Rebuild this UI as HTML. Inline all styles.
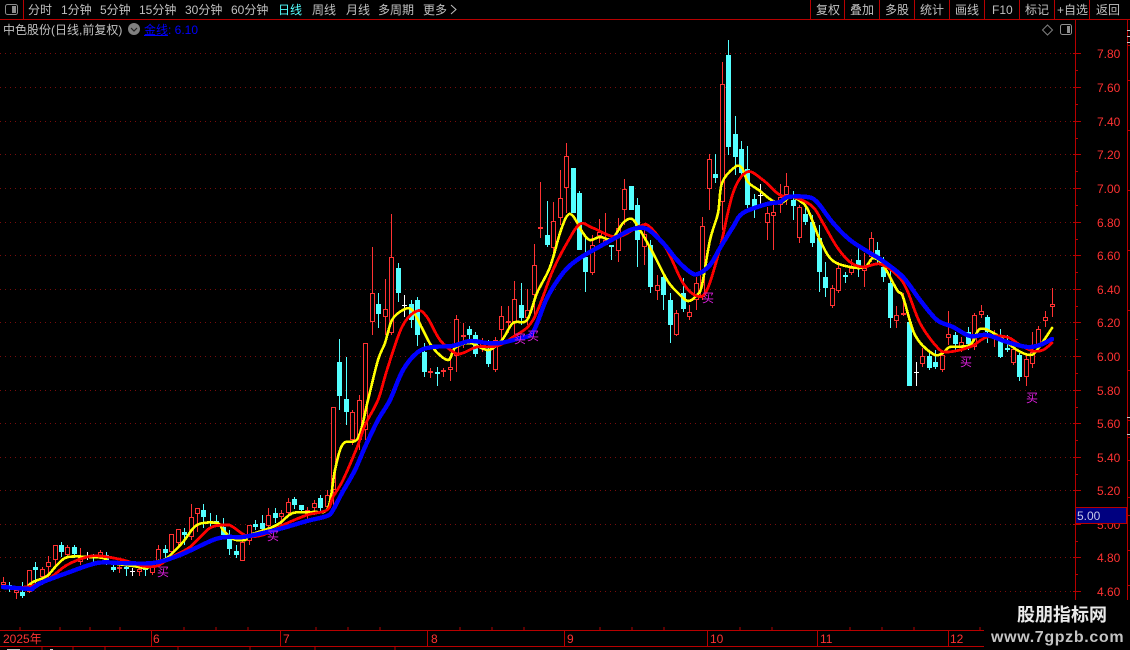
<!DOCTYPE html>
<html lang="zh"><head><meta charset="utf-8"><title>中色股份</title>
<style>
html,body{margin:0;padding:0;background:#000;width:1130px;height:650px;overflow:hidden}
svg{position:absolute;left:0;top:0;display:block}
text{font-family:"Liberation Sans","WenQuanYi Zen Hei","Noto Sans CJK SC",sans-serif;font-size:12px}
.t{fill:#c0c0c0}.p{fill:#ff3232}.m{fill:#e020e0}
</style></head><body>
<svg id="s" width="1130" height="650" viewBox="0 0 1130 650" xmlns="http://www.w3.org/2000/svg">
<rect width="1130" height="650" fill="#000"/>
<path d="M0 53.5H1075M0 87.5H1075M0 121.5H1075M0 154.5H1075M0 188.5H1075M0 222.5H1075M0 255.5H1075M0 289.5H1075M0 322.5H1075M0 356.5H1075M0 390.5H1075M0 423.5H1075M0 457.5H1075M0 490.5H1075M0 524.5H1075M0 557.5H1075M0 591.5H1075" stroke="#7a0c0c" stroke-width="1" stroke-dasharray="1 4" fill="none"/>
<g id="c" shape-rendering="crispEdges"></g>
<g id="l" fill="none" stroke-linejoin="round" stroke-linecap="round" shape-rendering="crispEdges">
<polyline stroke="#ffff00" stroke-width="2.6" points="27,587 33,582 47,576 57,565 68,557 90,557 103,558 112,563 133,566 147,568 155,562 167,558 183,542 197,525 217,523 223,530 233,539 245,540 250,535 270,528 280,523 293,513 313,512 328,508 335,470 343,444 358,438 368,400 378,360 385,343 392,320 403,310 412,310 423,330 433,348 448,360 455,348 470,343 488,350 502,340 513,323 527,320 537,293 550,267 560,233 567,216 573,216 583,233 590,240 600,237 612,239 623,223 632,219 640,230 653,253 667,280 677,292 688,301 697,295 702,285 710,240 718,213 722,183 735,167 742,168 748,182 760,191 773,201 783,202 790,197 800,201 808,210 820,240 832,260 850,267 865,267 873,258 883,265 897,290 903,297 915,335 933,354 943,353 950,347 970,345 980,329 997,335 1017,350 1030,355 1037,350 1052,328"/>
<polyline stroke="#ff0000" stroke-width="2.8" points="3,587 27,587 37,584 50,578 67,565 87,557 100,556 123,560 143,566 157,566 170,558 190,547 210,528 227,525 233,527 247,536 263,535 283,525 307,515 327,510 333,497 343,480 358,445 365,425 378,400 387,370 402,327 417,311 427,317 440,340 455,353 463,353 477,347 497,346 513,337 533,320 553,270 567,243 580,224 593,228 617,237 640,226 650,227 667,250 683,283 697,296 707,290 720,248 733,193 747,172 763,180 780,195 797,198 813,207 823,223 837,247 850,262 863,267 880,264 897,275 907,290 920,323 937,347 947,352 970,347 987,337 1007,337 1020,345 1033,351 1043,350 1052,343"/>
<polyline stroke="#0000ff" stroke-width="4.4" points="3,587 30,589 33,588 43,582 67,573 97,563 120,563 153,563 180,555 213,540 227,537 243,537 263,533 283,528 307,521 327,516 333,510 342,493 355,470 365,447 378,420 390,400 403,370 418,352 433,347 452,346 470,341 487,343 500,343 520,338 533,332 547,298 563,273 577,260 597,248 617,237 633,229 647,229 663,243 677,260 690,272 698,274 710,265 720,248 733,227 743,213 767,204 780,202 788,197 807,197 817,202 833,223 850,240 870,253 883,261 903,277 920,300 937,320 953,327 970,336 987,335 1007,342 1027,347 1040,345 1052,339"/>
</g>
<path fill="none" stroke="#b80000" d="M0 19.5H1130M23.5 0V19M810.5 0V19M844.5 0V19M879.5 0V19M914.5 0V19M949.5 0V19M984.5 0V19M1019.5 0V19M1054.5 0V19M1089.5 0V19M1075.5 19V600M1127.5 19V600M1073 53.5H1081M1073 87.5H1081M1073 121.5H1081M1073 154.5H1081M1073 188.5H1081M1073 222.5H1081M1073 255.5H1081M1073 289.5H1081M1073 322.5H1081M1073 356.5H1081M1073 390.5H1081M1073 423.5H1081M1073 457.5H1081M1073 490.5H1081M1073 524.5H1081M1073 557.5H1081M1073 591.5H1081M1075 70.5H1078M1075 104.5H1078M1075 138.5H1078M1075 171.5H1078M1075 205.5H1078M1075 239.5H1078M1075 272.5H1078M1075 306.5H1078M1075 339.5H1078M1075 373.5H1078M1075 407.5H1078M1075 440.5H1078M1075 474.5H1078M1075 507.5H1078M1075 541.5H1078M1075 574.5H1078M1127 45.5H1130M1127 80.5H1130M1127 130.5H1130M1127 190.5H1130M1127 250.5H1130M1127 310.5H1130M1127 370.5H1130M1127 420.5H1130M1127 437.5H1130M1127 460.5H1130M1127 497.5H1130M1127 515.5H1130M1127 550.5H1130M1127 585.5H1130M0 630.5H984M0 646.5H984M151.5 630V646M280.5 630V646M427.5 630V646M564.5 630V646M707.5 630V646M817.5 630V646M948.5 630V646M20 630V627M60 630V627M90 630V627M120 630V627M184 630V627M216 630V627M248 630V627M316 630V627M348 630V627M380 630V627M460 630V627M492 630V627M524 630V627M600 630V627M632 630V627M664 630V627M740 630V627M772 630V627M850 630V627M882 630V627M914 630V627M980 630V627M42 646V650M73 646V650M105 646V650M178 646V650M250 646V650M315 646V650M395 646V650"/>
<path stroke="#c8c8c8" d="M1127 30.5H1130M1127 36.5H1130M1127 42.5H1130M1127 417.5H1130M1127 434.5H1130M7 649.5H20M50 649.5H53" fill="none"/>
<g>
<rect x="5.5" y="4.5" width="12" height="10" rx="2" fill="none" stroke="#8c8c8c"/><rect x="12" y="6" width="4" height="7" fill="#8c8c8c"/>
<text class="t" x="28" y="14">分时</text><text class="t" x="61" y="14">1分钟</text><text class="t" x="100" y="14">5分钟</text><text class="t" x="139" y="14">15分钟</text><text class="t" x="185" y="14">30分钟</text><text class="t" x="231" y="14">60分钟</text><text x="278" y="14" fill="#54ffff">日线</text><text class="t" x="312" y="14">周线</text><text class="t" x="346" y="14">月线</text><text class="t" x="378" y="14">多周期</text><text class="t" x="423" y="14">更多</text><path d="M451 5l5 4.5-5 4.5" fill="none" stroke="#c0c0c0"/>
<text class="t" x="816" y="14">复权</text><text class="t" x="850" y="14">叠加</text><text class="t" x="885" y="14">多股</text><text class="t" x="920" y="14">统计</text><text class="t" x="955" y="14">画线</text><text class="t" x="992" y="14">F10</text><text class="t" x="1025" y="14">标记</text><text class="t" x="1057" y="14">+自选</text><text class="t" x="1096" y="14">返回</text>
<text class="t" x="3" y="34">中色股份(日线,前复权)</text>
<circle cx="134" cy="29" r="6" fill="#808080"/><path d="M131 28l3 3 3-3" fill="none" stroke="#222" stroke-width="1.2"/>
<text x="144" y="34" fill="#0000ff">金线: 6.10</text><path d="M144 35.5H168" stroke="#0000ff"/>
<path d="M1047.5 25l5 5-5 5-5-5z" fill="none" stroke="#808080"/>
<rect x="1060.5" y="24.5" width="11" height="10" rx="2" fill="none" stroke="#909090"/><rect x="1067" y="26" width="3" height="7" fill="#909090"/>
</g>
<g class="p">
<text class="p" x="1097" y="58">7.80</text><text class="p" x="1097" y="92">7.60</text><text class="p" x="1097" y="126">7.40</text><text class="p" x="1097" y="159">7.20</text><text class="p" x="1097" y="193">7.00</text><text class="p" x="1097" y="227">6.80</text><text class="p" x="1097" y="260">6.60</text><text class="p" x="1097" y="294">6.40</text><text class="p" x="1097" y="327">6.20</text><text class="p" x="1097" y="361">6.00</text><text class="p" x="1097" y="395">5.80</text><text class="p" x="1097" y="428">5.60</text><text class="p" x="1097" y="462">5.40</text><text class="p" x="1097" y="495">5.20</text><text class="p" x="1097" y="529">5.00</text><text class="p" x="1097" y="562">4.80</text><text class="p" x="1097" y="596">4.60</text>
<text class="p" x="3" y="643">2025年</text><text class="p" x="153" y="643">6</text><text class="p" x="283" y="643">7</text><text class="p" x="431" y="643">8</text><text class="p" x="567" y="643">9</text><text class="p" x="710" y="643">10</text><text class="p" x="820" y="643">11</text><text class="p" x="950" y="643">12</text>
</g>
<rect x="1075.5" y="507.5" width="51" height="16" fill="#000080" stroke="#b80000"/>
<text x="1077" y="520" fill="#c8c8e8">5.00</text>
<g>
<text class="m" x="157" y="576">买</text><text class="m" x="267" y="540">买</text><text class="m" x="514" y="343">买</text><text class="m" x="527" y="340">买</text><text class="m" x="702" y="302">买</text><text class="m" x="960" y="366">买</text><text class="m" x="1026" y="402">买</text>
</g>
<rect x="984" y="600" width="146" height="50" fill="#000"/>
<text x="1017" y="621" fill="#eaeaea" style="font-size:18px;font-weight:bold;font-family:'Noto Sans CJK SC',sans-serif">股朋指标网</text>
<text x="991" y="642" fill="#c4c4c4" style="font-size:16px;font-weight:bold;letter-spacing:.65px">www.7gpzb.com</text>
</svg>
<script>
var R=[[3,577,582,585,587],[16,589,590,593,599],[29,570,570,592,593],[42,567,569,577,585],[48,556,562,567,578],[55,545,545,560,565],[67,545,547,555,558],[80,548,558,562,565],[100,550,552,557,559],[119,565,567,569,573],[139,567,569,572,576],[152,565,567,573,575],[158,545,549,561,566],[171,534,534,552,553],[178,529,529,543,548],[191,504,517,537,540],[197,508,508,514,532],[242,540,542,561,561],[249,525,525,541,545],[268,508,515,526,530],[281,510,513,517,525],[288,498,502,513,516],[307,507,510,514,520],[314,500,503,508,515],[327,490,495,507,510],[333,407,407,490,508],[352,410,412,440,445],[359,395,400,440,450],[365,343,343,430,440],[372,247,293,322,335],[385,279,309,317,335],[391,214,257,333,335],[430,368,371,373,378],[443,368,370,372,377],[450,359,367,370,381],[456,315,319,356,372],[463,323,335,337,348],[482,338,343,347,352],[495,337,340,370,372],[501,306,316,330,340],[508,306,321,323,333],[514,281,299,322,335],[527,289,310,318,325],[534,244,265,295,320],[540,182,227,229,238],[553,202,221,248,255],[560,170,198,218,225],[566,143,156,188,213],[592,235,245,273,275],[599,219,232,236,243],[605,213,240,245,245],[618,218,228,251,262],[624,179,189,210,225],[644,225,234,247,265],[657,275,285,291,300],[676,310,313,335,336],[689,305,312,317,320],[696,277,283,300,310],[702,217,226,297,300],[709,154,159,189,210],[722,62,84,202,230],[767,207,213,223,240],[773,200,212,216,250],[780,184,197,205,213],[786,173,186,195,205],[799,205,207,238,243],[832,285,288,306,308],[838,262,268,291,293],[851,259,268,273,275],[864,253,268,271,287],[871,232,238,257,262],[896,306,315,321,328],[903,293,313,315,316],[922,348,356,364,367],[942,350,355,370,372],[948,311,334,338,345],[961,337,342,347,352],[974,313,315,347,350],[981,305,311,315,318],[994,330,335,337,347],[1013,340,349,363,365],[1026,355,359,377,386],[1032,332,352,364,368],[1038,326,329,345,348],[1045,311,317,321,327],[1052,288,304,307,317]];
var C=[[9,582,585,588,592],[22,582,592,596,598],[35,562,567,570,583],[61,542,545,552,557],[74,545,547,554,558],[93,554,555,557,562],[106,552,555,564,565],[113,565,567,570,572],[126,565,567,569,576],[145,566,568,570,576],[165,545,549,553,558],[184,528,532,535,545],[203,504,510,517,528],[210,513,521,523,527],[216,515,521,523,527],[223,518,527,535,537],[229,530,537,549,555],[236,545,551,555,558],[255,520,524,527,530],[262,515,523,529,535],[275,508,513,518,523],[294,497,499,505,509],[301,505,505,510,512],[320,495,498,508,513],[339,339,362,396,410],[346,357,399,412,425],[378,293,304,314,328],[398,263,268,293,302],[411,300,304,320,328],[417,297,300,335,346],[424,343,352,372,377],[437,367,372,374,386],[469,326,329,335,343],[475,332,335,354,357],[488,340,350,364,367],[521,283,305,318,325],[547,201,235,245,247],[573,168,168,213,213],[579,191,193,250,250],[585,235,257,272,292],[611,245,245,247,260],[631,186,186,210,210],[637,198,205,240,267],[650,240,245,287,293],[663,273,277,295,310],[670,293,300,325,343],[683,278,293,309,312],[715,154,174,178,183],[728,40,55,147,155],[735,116,134,157,175],[741,141,149,173,175],[747,146,169,205,208],[754,194,199,207,218],[793,191,200,206,220],[805,205,214,222,225],[812,215,222,243,247],[819,225,238,272,292],[825,262,277,288,297],[845,272,275,277,283],[858,248,260,266,277],[877,242,250,260,265],[883,257,267,277,282],[890,270,283,318,328],[909,322,322,386,386],[929,350,356,368,370],[935,350,362,367,369],[955,332,335,344,350],[968,327,332,344,350],[987,315,317,332,343],[1000,329,338,357,358],[1007,335,348,350,352],[1019,353,355,377,381]];
var W=[[87,552,560,556],[132,568,576,571],[404,295,317,305],[760,184,205,195],[916,362,386,372]];
var h='';
function r(x,y,w,hh,f){return '<rect x="'+x+'" y="'+y+'" width="'+w+'" height="'+hh+'" fill="'+f+'"/>';}
R.forEach(function(a){var x=a[0];h+=r(x,a[1],1,a[4]-a[1],'#ff3232');h+='<rect x="'+(x-1.5)+'" y="'+(a[2]+.5)+'" width="4" height="'+Math.max(1,a[3]-a[2]-1)+'" fill="#000" stroke="#ff3232" stroke-width="1"/>';});
C.forEach(function(a){var x=a[0];h+=r(x,a[1],1,a[4]-a[1],'#54ffff');h+=r(x-2,a[2],5,Math.max(1,a[3]-a[2]),'#54ffff');});
W.forEach(function(a){var x=a[0];h+=r(x,a[1],1,a[2]-a[1],'#ffffff');h+=r(x-2,a[3],5,1,'#ffffff');});
document.getElementById('c').innerHTML=h;
var g=document.getElementById('l'),o='';
Array.prototype.forEach.call(g.querySelectorAll('polyline'),function(p){
 var v=p.getAttribute('points').split(' ').map(function(s){return s.split(',').map(Number);}),d='M'+v[0];
 for(var i=0;i<v.length-1;i++){
  var a=v[Math.max(i-1,0)],b=v[i],c=v[i+1],e=v[Math.min(i+2,v.length-1)];
  d+='C'+(b[0]+(c[0]-a[0])/6).toFixed(1)+' '+(b[1]+(c[1]-a[1])/6).toFixed(1)+' '+(c[0]-(e[0]-b[0])/6).toFixed(1)+' '+(c[1]-(e[1]-b[1])/6).toFixed(1)+' '+c[0]+' '+c[1];
 }
 o+='<path d="'+d+'" stroke="'+p.getAttribute('stroke')+'" stroke-width="'+p.getAttribute('stroke-width')+'"/>';
});
g.innerHTML=o;
</script>
</body></html>
